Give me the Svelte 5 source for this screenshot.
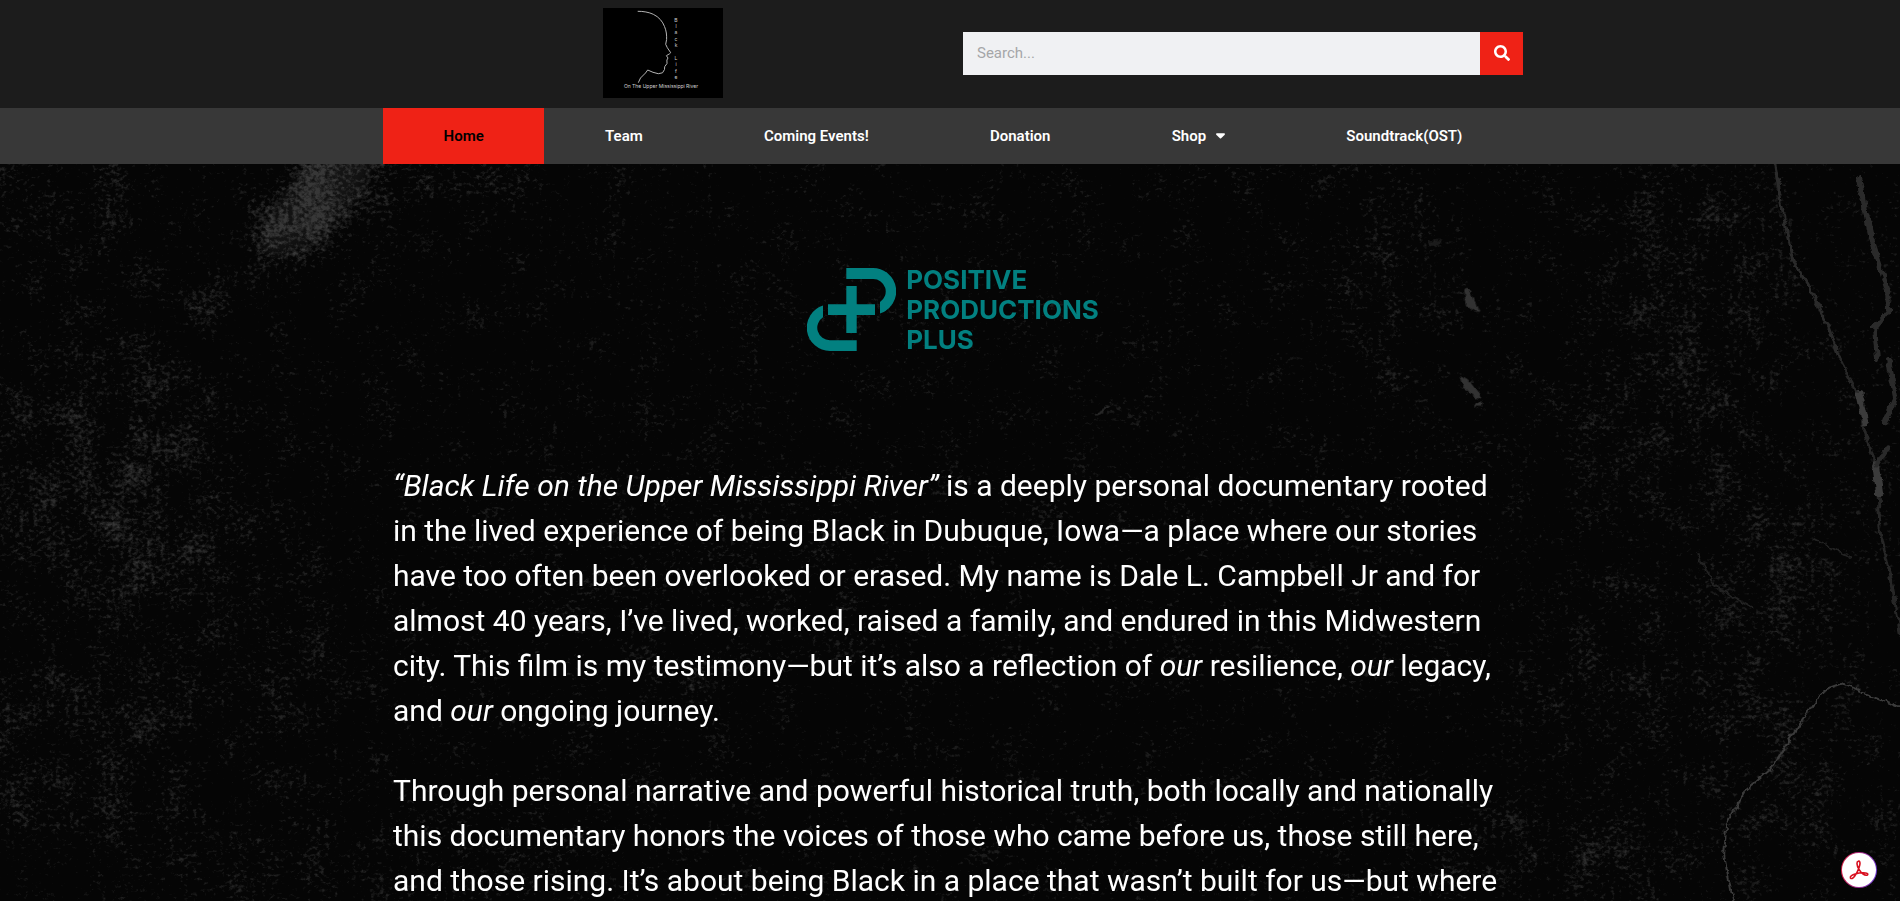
<script lang="ts">
  const links = [
    { label: 'Home', href: '#home', active: true },
    { label: 'Team', href: '#team' },
    { label: 'Coming Events!', href: '#events' },
    { label: 'Donation', href: '#donation' },
    { label: 'Shop', href: '#shop', submenu: true },
    { label: 'Soundtrack(OST)', href: '#soundtrack' },
  ];

  const titleLetters = [...'Black Life'];

  let query = $state('');

  function handleSearch(e: SubmitEvent) {
    e.preventDefault();
    query = query.trim();
  }
</script>

<div class="page">
  <header>
    <div class="container header-row">
      <div class="header-col">
        <a class="film-logo" href="#home" aria-label="Black Life On The Upper Mississippi River">
          <svg viewBox="0 0 120 90" width="120" height="90">
            <rect width="120" height="90" fill="#000" />
            <path
              d="M34.7 3.3C40 3.2 46 4.2 50.3 6.3C56 9 59.600 13.500 61.500 18.500C63.500 23 63.700 27 63.600 31.500L62.700 36.300L64.300 39.700L67.700 44.700L66.500 45.800L63.400 47.700L65 50L63.900 52L64 55.500L61.700 58.700L61.500 61.500L59.500 64.800L55.300 65.700L50 64.300L44.700 62L42.500 65L37.500 70L35.300 74.700"
              fill="none"
              stroke="#b4b4b4"
              stroke-width="1"
            />
            <g class="film-title">
              {#each titleLetters as letter, i}
                <text x="73" y={13.5 + i * 6.4} text-anchor="middle">{letter}</text>
              {/each}
              <text x="58" y="80" text-anchor="middle">On The Upper Mississippi River</text>
            </g>
          </svg>
        </a>
      </div>
      <div class="header-col">
        <form class="search" role="search" onsubmit={handleSearch}>
          <input type="search" placeholder="Search..." aria-label="Search" bind:value={query} />
          <button type="submit" aria-label="Search">
            <svg viewBox="0 0 512 512" width="16" height="16" fill="currentColor">
              <path d="M505 442.700L405.300 343c-4.500-4.500-10.600-7-17-7H372c27.600-35.300 44-79.700 44-128C416 93.100 322.900 0 208 0S0 93.100 0 208s93.100 208 208 208c48.300 0 92.700-16.400 128-44v16.300c0 6.400 2.500 12.500 7 17l99.700 99.700c9.400 9.400 24.600 9.400 33.900 0l28.300-28.300c9.400-9.400 9.400-24.600.1-34zM208 336c-70.700 0-128-57.200-128-128 0-70.700 57.200-128 128-128 70.700 0 128 57.200 128 128 0 70.700-57.200 128-128 128z" />
            </svg>
          </button>
        </form>
      </div>
    </div>
  </header>

  <nav>
    <ul class="container">
      {#each links as link}
        <li>
          <a href={link.href} class:active={link.active}>
            {link.label}
            {#if link.submenu}
              <svg class="caret" viewBox="0 0 10 6" width="9" height="6" fill="currentColor">
                <path d="M1 0h8c.9 0 1.200.9.7 1.500L5.700 5.600c-.4.4-1 .4-1.400 0L.3 1.500C-.2.900.1 0 1 0z" />
              </svg>
            {/if}
          </a>
        </li>
      {/each}
    </ul>
  </nav>

  <main>
    <!-- worn stone backdrop: speckle follows the brightness of the blurred shapes -->
    <svg class="backdrop" viewBox="0 0 1900 737" preserveAspectRatio="xMidYMin slice" aria-hidden="true">
      <defs>
        <filter id="soft" x="-50%" y="-50%" width="200%" height="200%">
          <feGaussianBlur stdDeviation="22" />
        </filter>
        <filter id="tight" x="-50%" y="-50%" width="200%" height="200%">
          <feGaussianBlur stdDeviation="11" />
        </filter>
        <filter id="speckle" filterUnits="userSpaceOnUse" x="0" y="0" width="1900" height="737" color-interpolation-filters="sRGB">
          <feTurbulence type="fractalNoise" baseFrequency="0.22 0.26" numOctaves="4" seed="11" result="grain" />
          <feColorMatrix in="grain" type="matrix" values="0 0 0 0 1  0 0 0 0 1  0 0 0 0 1  1 0 0 0 0" result="white" />
          <feTurbulence type="fractalNoise" baseFrequency="0.03" numOctaves="4" seed="4" result="clouds" />
          <feColorMatrix in="clouds" type="matrix" values="0 0 0 0 1  0 0 0 0 1  0 0 0 0 1  1 0 0 0 0" result="patches" />
          <feComposite in="white" in2="patches" operator="arithmetic" k2="1.7" k3="1" k4="-1.05" result="mix" />
          <feComposite in="mix" in2="SourceGraphic" operator="arithmetic" k2="1.1" k3="1.1" k4="-0.65" />
        </filter>
        <filter id="rough" x="-10%" y="-10%" width="120%" height="120%">
          <feTurbulence type="fractalNoise" baseFrequency="0.12" numOctaves="3" seed="7" />
          <feDisplacementMap in="SourceGraphic" scale="7" xChannelSelector="R" yChannelSelector="G" />
          <feGaussianBlur stdDeviation="0.600" />
        </filter>
      </defs>
      <rect width="1900" height="737" fill="#050505" />
      <g filter="url(#speckle)" opacity="0.2" fill="#fff">
        <rect width="1900" height="737" fill-opacity="0.02" />
        <g filter="url(#soft)">
          <ellipse cx="110" cy="310" rx="130" ry="140" fill-opacity="0.28" />
          <ellipse cx="60" cy="590" rx="110" ry="90" fill-opacity="0.24" />
          <ellipse cx="230" cy="480" rx="140" ry="130" fill-opacity="0.15" />
          <ellipse cx="60" cy="40" rx="100" ry="90" fill-opacity="0.16" />
          <ellipse cx="420" cy="10" rx="110" ry="40" fill-opacity="0.26" />
          <ellipse cx="350" cy="700" rx="250" ry="60" fill-opacity="0.15" />
          <ellipse cx="700" cy="400" rx="180" ry="120" fill-opacity="0.08" />
          <ellipse cx="1390" cy="110" rx="60" ry="120" fill-opacity="0.14" />
          <ellipse cx="1690" cy="110" rx="100" ry="120" fill-opacity="0.22" />
          <ellipse cx="1660" cy="270" rx="110" ry="80" fill-opacity="0.22" />
          <ellipse cx="1770" cy="400" rx="90" ry="80" fill-opacity="0.22" />
          <ellipse cx="1640" cy="520" rx="120" ry="100" fill-opacity="0.16" />
          <ellipse cx="1570" cy="690" rx="160" ry="40" fill-opacity="0.28" />
          <ellipse cx="1790" cy="600" rx="80" ry="110" fill-opacity="0.18" />
        </g>
        <g filter="url(#tight)">
          <ellipse cx="316" cy="38" rx="84" ry="38" fill-opacity="0.86" transform="rotate(-46 316 38)" />
          <ellipse cx="200" cy="134" rx="34" ry="14" fill-opacity="0.5" />
          <ellipse cx="140" cy="300" rx="18" ry="22" fill-opacity="0.5" />
          <ellipse cx="110" cy="355" rx="24" ry="24" fill-opacity="0.3" />
          <ellipse cx="135" cy="405" rx="16" ry="26" fill-opacity="0.3" />
          <ellipse cx="700" cy="510" rx="24" ry="24" fill-opacity="0.3" />
          <ellipse cx="1800" cy="400" rx="42" ry="14" fill-opacity="0.3" transform="rotate(22 1800 400)" />
        </g>
      </g>
      <g filter="url(#rough)" fill="none" stroke="#3a3a3a" stroke-linecap="round" stroke-linejoin="round">
        <path d="M1772 -4L1779 40L1790 94L1800 112L1816 140L1828 168L1838 196" stroke-width="3" stroke="#2a2a2a" />
        <path d="M1838 196L1856 230L1861 262L1874 304L1878 370L1888 410L1898 470" stroke-width="3" stroke="#262626" />
        <path d="M1857 230l6 26M1873 300l4 28" stroke-width="7" />
        <path d="M1856 14L1868 70L1885 126L1886 146L1872 164L1875 194M1886 196L1893 232L1882 258M1886 282L1874 300" stroke-width="5" stroke="#2c2c2c" />
        <path d="M1906 546L1840 519L1820 526L1800 555L1768 604L1742 626L1724 660L1722 690L1732 740" stroke-width="2" />
        <path d="M1694 388L1712 420L1750 442M1812 374L1848 392" stroke-width="2" stroke="#202020" />
      </g>
      <g fill="#303030" filter="url(#rough)">
        <path d="M1463 125q4-4 8 4l6 18q-5 2-13-6z" />
        <path d="M1459 212q10 1 21 20l-5 3q-12-7-16-23zM1473 238h8v4h-8z" />
        <path d="M1427 78q8-5 14-3q-2 6-12 7z" opacity="0.5" />
        <path d="M1094 250l17-10-1 3-12 8z" opacity="0.8" />
      </g>
    </svg>

    <div class="container content">
      <div class="brand">
        <svg viewBox="24 18 89 83" width="89" height="83" fill="#028080" aria-hidden="true">
          <path d="M63.300 18H90a23.300 23.300 0 0 1 7 45.500V52a12.500 12.500 0 0 0-7-23H63.300z" />
          <path d="M73.700 101H47a23.300 23.300 0 0 1-7-45.500V67.200a12.500 12.500 0 0 0 7 23H73.700z" />
          <path d="M63.300 36h10.400v18.300H92V65H73.700v18H63.300V65H45V54.300h18.300z" />
        </svg>
        <p class="brand-name">POSITIVE<br />PRODUCTIONS<br />PLUS</p>
      </div>

      <div class="story">
        <p>
          <em>“Black Life on the Upper Mississippi River”</em> is a deeply personal documentary rooted in
          the lived experience of being Black in Dubuque, Iowa—a place where our stories have too often
          been overlooked or erased. My name is Dale L. Campbell Jr and for almost 40 years, I’ve lived,
          worked, raised a family, and endured in this Midwestern city. This film is my testimony—but
          it’s also a reflection of <em>our</em> resilience, <em>our</em> legacy, and <em>our</em> ongoing
          journey.
        </p>
        <p>
          Through personal narrative and powerful historical truth, both locally and nationally this
          documentary honors the voices of those who came before us, those still here, and those rising.
          It’s about being Black in a place that wasn’t built for us—but where
        </p>
      </div>
    </div>
  </main>

  <button type="button" class="pdf-button" aria-label="Open in Acrobat">
    <svg viewBox="0 0 20 20" width="20" height="20" fill="none" stroke="#d8101f" stroke-width="1.600" stroke-linejoin="round">
      <path d="M9.300 1.200c1.500-.3 2 1.400 1.500 3.600C10 9 6.500 16.500 3.600 18.200c-1.200.7-2.600.2-2.300-1 .5-2.300 8.200-4.700 13.200-4.500 2.600.1 4.500.6 4.300 1.700-.2 1.300-2.600 1-4.700-.4C11 12 8.200 7.300 8 3.800c-.1-1.500.4-2.400 1.300-2.600z" />
    </svg>
  </button>
</div>

<style>
  :global(body) {
    margin: 0;
    background: #050505;
  }

  .page {
    display: flex;
    flex-direction: column;
    min-height: 100vh;
    font-family: Roboto, 'Liberation Sans', sans-serif;
    color: #fff;
  }

  .container {
    width: 100%;
    max-width: 1146px;
    margin: 0 auto;
    padding: 0 0 0 6px;
    box-sizing: border-box;
  }

  header {
    background: #1c1c1c;
    padding: 8px 0 10px;
  }

  .header-row {
    display: grid;
    grid-template-columns: 1fr 1fr;
    gap: 20px;
    align-items: center;
  }

  .header-col {
    display: flex;
    justify-content: center;
  }

  .film-logo,
  .film-logo svg {
    display: block;
  }

  .film-title {
    font-family: Inter, 'Liberation Sans', sans-serif;
    font-size: 5px;
    fill: #d0d0d0;
  }

  .search {
    display: flex;
    width: 100%;
    height: 43px;
  }

  .search input {
    flex: 1;
    min-width: 0;
    padding: 0 14px;
    border: none;
    border-radius: 0;
    background: #f0f1f3;
    color: #333;
    font-family: inherit;
    font-size: 15px;
    appearance: none;
    outline: none;
  }

  .search input::placeholder {
    color: #a5a6a8;
  }

  .search button {
    display: flex;
    align-items: center;
    justify-content: center;
    width: 43px;
    padding: 0;
    border: none;
    background: #ef2216;
    color: #fff;
    cursor: pointer;
  }

  nav {
    background: #383838;
  }

  nav ul {
    display: flex;
    list-style: none;
  }

  nav li {
    flex: 1 1 auto;
  }

  nav a {
    display: flex;
    align-items: center;
    justify-content: center;
    gap: 10px;
    height: 56px;
    padding: 0 20px;
    color: #fff;
    font-size: 15px;
    font-weight: 600;
    text-decoration: none;
    white-space: nowrap;
  }

  nav a:hover,
  nav a.active {
    background: #ef2216;
    color: #000;
  }

  main {
    position: relative;
    flex: 1;
    overflow: hidden;
  }

  .backdrop {
    position: absolute;
    inset: 0;
    width: 100%;
    height: 100%;
  }

  .content {
    position: relative;
    padding-top: 104px;
  }

  .brand {
    display: flex;
    align-items: center;
    justify-content: center;
    gap: 10px;
    height: 83px;
    margin-bottom: 112px;
  }

  .brand-name {
    margin: 0;
    color: #028080;
    font-family: Inter, 'Liberation Sans', sans-serif;
    font-size: 26px;
    font-weight: 700;
    line-height: 30px;
  }

  .story {
    padding: 0 10px;
    font-size: 30px;
    line-height: 45px;
  }

  .story p {
    margin: 0 0 35px;
  }

  .story p:last-child {
    margin-bottom: 0;
  }

  .pdf-button {
    position: fixed;
    right: 23px;
    bottom: 13px;
    display: flex;
    align-items: center;
    justify-content: center;
    width: 36px;
    height: 36px;
    padding: 0;
    border: 1px solid transparent;
    border-radius: 50%;
    background:
      linear-gradient(#fff, #fff) padding-box,
      linear-gradient(100deg, #e0203c, #6a3fe0) border-box;
    cursor: pointer;
  }

  @media (max-width: 900px) {
    .header-row {
      grid-template-columns: 1fr;
    }

    nav ul {
      flex-wrap: wrap;
    }
  }
</style>
